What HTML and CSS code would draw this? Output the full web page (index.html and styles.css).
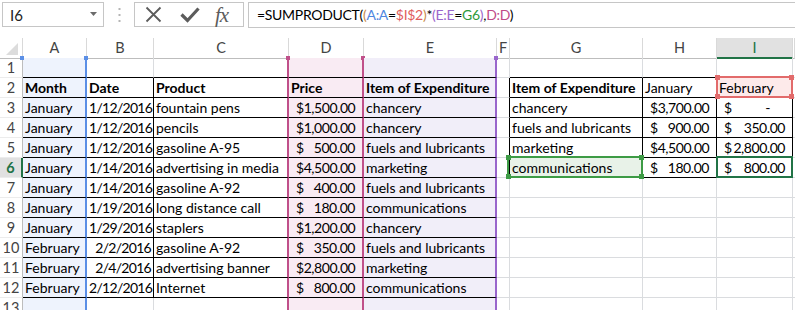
FILE: index.html
```html
<!DOCTYPE html>
<html lang="en">
<head>
    <meta charset="UTF-8">
    <title>SUMPRODUCT</title>
    <link rel="stylesheet" href="styles.css">
</head>
<body>
    <!-- Barra de fórmulas -->
    <div class="formula-bar">
        <div class="name-box">
            <span>I6</span>
            <svg width="8" height="5" viewBox="0 0 8 5"><path d="M0 0h7l-3.5 4z" fill="#6b6b6b"/></svg>
        </div>
        <div class="grip">
            <svg width="3" height="14" viewBox="0 0 3 14">
                <rect x="0.5" y="0" width="2" height="2" fill="#b5b5b5"/>
                <rect x="0.5" y="6" width="2" height="2" fill="#b5b5b5"/>
                <rect x="0.5" y="12" width="2" height="2" fill="#b5b5b5"/>
            </svg>
        </div>
        <div class="fx-box">
            <svg class="ico-x" width="17" height="17" viewBox="0 0 17 17"><path d="M1.5 1.5l14 14M15.5 1.5l-14 14" stroke="#5c5c5c" stroke-width="1.8"/></svg>
            <svg class="ico-ok" width="20" height="16" viewBox="0 0 20 16"><path d="M1.5 7.5l6 6l11-12" stroke="#5c5c5c" stroke-width="3.2" fill="none"/></svg>
            <span class="fx">fx</span>
        </div>
        <div class="formula-input">=SUMPRODUCT(<span class="p2">(</span><span class="f-a">A:A</span>=<span class="f-i">$I$2</span><span class="p2">)</span>*<span class="p3">(</span><span class="f-e">E:E</span>=<span class="f-g">G6</span><span class="p3">)</span>,<span class="f-d">D:D</span>)</div>
    </div>

    <!-- Planilha -->
    <div class="sheet">
        <div class="row head">
            <div class="corner"><span class="tri"></span></div>
            <div class="ch">A</div><div class="ch">B</div><div class="ch">C</div><div class="ch">D</div>
            <div class="ch">E</div><div class="ch">F</div><div class="ch">G</div><div class="ch">H</div>
            <div class="ch ch-on">I</div><div class="ch"></div>
        </div>

        <div class="row">
            <div class="rh">1</div>
            <div class="c ra tt"><i class="hd hd-l blue"></i><i class="hd hd-r blue"></i></div>
            <div class="c tt"></div>
            <div class="c rc tt"></div>
            <div class="c rd tt"><i class="hd hd-l pink"></i><i class="hd hd-r pink"></i></div>
            <div class="c re tt"><i class="hd hd-r purple"></i></div>
            <div class="c"></div>
            <div class="c tt"></div><div class="c tt"></div><div class="c tt"></div><div class="c"></div>
        </div>

        <div class="row">
            <div class="rh">2</div>
            <div class="c ra t b">Month</div>
            <div class="c t b">Date</div>
            <div class="c rc t b">Product</div>
            <div class="c rd t b">Price</div>
            <div class="c re t b">Item of Expenditure</div>
            <div class="c tl"></div>
            <div class="c t b">Item of Expenditure</div>
            <div class="c t">January</div>
            <div class="c t mark-red"><span class="mark"><i></i><i></i><i></i><i></i></span>February</div>
            <div class="c"></div>
        </div>

        <div class="row">
            <div class="rh">3</div>
            <div class="c ra t">January</div>
            <div class="c t num">1/12/2016</div>
            <div class="c rc t">fountain pens</div>
            <div class="c rd t acc"><span>$</span><span>1,500.00</span></div>
            <div class="c re t">chancery</div>
            <div class="c tl"></div>
            <div class="c t">chancery</div>
            <div class="c t acc"><span>$</span><span>3,700.00</span></div>
            <div class="c t acc zero"><span>$</span><span>-</span></div>
            <div class="c"></div>
        </div>

        <div class="row">
            <div class="rh">4</div>
            <div class="c ra t">January</div>
            <div class="c t num">1/12/2016</div>
            <div class="c rc t">pencils</div>
            <div class="c rd t acc"><span>$</span><span>1,000.00</span></div>
            <div class="c re t">chancery</div>
            <div class="c tl"></div>
            <div class="c t">fuels and lubricants</div>
            <div class="c t acc"><span>$</span><span>900.00</span></div>
            <div class="c t acc"><span>$</span><span>350.00</span></div>
            <div class="c"></div>
        </div>

        <div class="row">
            <div class="rh">5</div>
            <div class="c ra t">January</div>
            <div class="c t num">1/12/2016</div>
            <div class="c rc t">gasoline A-95</div>
            <div class="c rd t acc"><span>$</span><span>500.00</span></div>
            <div class="c re t">fuels and lubricants</div>
            <div class="c tl"></div>
            <div class="c t">marketing</div>
            <div class="c t acc"><span>$</span><span>4,500.00</span></div>
            <div class="c t acc"><span>$</span><span>2,800.00</span></div>
            <div class="c"></div>
        </div>

        <div class="row">
            <div class="rh rh-on">6</div>
            <div class="c ra t">January</div>
            <div class="c t num">1/14/2016</div>
            <div class="c rc t">advertising in media</div>
            <div class="c rd t acc"><span>$</span><span>4,500.00</span></div>
            <div class="c re t">marketing</div>
            <div class="c tl"></div>
            <div class="c t mark-green"><span class="mark"><i></i><i></i><i></i><i></i></span>communications</div>
            <div class="c t acc"><span>$</span><span>180.00</span></div>
            <div class="c t acc active"><span class="mark"></span><span>$</span><span>800.00</span></div>
            <div class="c"></div>
        </div>

        <div class="row">
            <div class="rh">7</div>
            <div class="c ra t">January</div>
            <div class="c t num">1/14/2016</div>
            <div class="c rc t">gasoline A-92</div>
            <div class="c rd t acc"><span>$</span><span>400.00</span></div>
            <div class="c re t">fuels and lubricants</div>
            <div class="c"></div><div class="c"></div><div class="c"></div><div class="c"></div><div class="c"></div>
        </div>

        <div class="row">
            <div class="rh">8</div>
            <div class="c ra t">January</div>
            <div class="c t num">1/19/2016</div>
            <div class="c rc t">long distance call</div>
            <div class="c rd t acc"><span>$</span><span>180.00</span></div>
            <div class="c re t">communications</div>
            <div class="c"></div><div class="c"></div><div class="c"></div><div class="c"></div><div class="c"></div>
        </div>

        <div class="row">
            <div class="rh">9</div>
            <div class="c ra t">January</div>
            <div class="c t num">1/29/2016</div>
            <div class="c rc t">staplers</div>
            <div class="c rd t acc"><span>$</span><span>1,200.00</span></div>
            <div class="c re t">chancery</div>
            <div class="c"></div><div class="c"></div><div class="c"></div><div class="c"></div><div class="c"></div>
        </div>

        <div class="row">
            <div class="rh">10</div>
            <div class="c ra t">February</div>
            <div class="c t num">2/2/2016</div>
            <div class="c rc t">gasoline A-92</div>
            <div class="c rd t acc"><span>$</span><span>350.00</span></div>
            <div class="c re t">fuels and lubricants</div>
            <div class="c"></div><div class="c"></div><div class="c"></div><div class="c"></div><div class="c"></div>
        </div>

        <div class="row">
            <div class="rh">11</div>
            <div class="c ra t">February</div>
            <div class="c t num">2/4/2016</div>
            <div class="c rc t">advertising banner</div>
            <div class="c rd t acc"><span>$</span><span>2,800.00</span></div>
            <div class="c re t">marketing</div>
            <div class="c"></div><div class="c"></div><div class="c"></div><div class="c"></div><div class="c"></div>
        </div>

        <div class="row">
            <div class="rh">12</div>
            <div class="c ra t">February</div>
            <div class="c t num">2/12/2016</div>
            <div class="c rc t">Internet</div>
            <div class="c rd t acc"><span>$</span><span>800.00</span></div>
            <div class="c re t">communications</div>
            <div class="c"></div><div class="c"></div><div class="c"></div><div class="c"></div><div class="c"></div>
        </div>

        <div class="row">
            <div class="rh">13</div>
            <div class="c ra"></div>
            <div class="c"></div>
            <div class="c rc"></div>
            <div class="c rd"></div>
            <div class="c re"></div>
            <div class="c"></div><div class="c"></div><div class="c"></div><div class="c"></div><div class="c"></div>
        </div>
    </div>
</body>
</html>
```

FILE: styles.css
```css
/* Reset */
* {
    margin: 0;
    padding: 0;
    box-sizing: border-box;
}

body {
    width: 795px;
    height: 310px;
    overflow: hidden;
    background: #fff;
    color: #000;
    font-family: Lato, "Open Sans", sans-serif;
}

/* Barra de fórmulas */
.formula-bar {
    display: flex;
    align-items: flex-start;
    height: 38px;
    padding: 2px 0 0 2px;
}

.name-box {
    width: 102px;
    height: 25px;
    border: 1px solid #c6c6c6;
    display: flex;
    align-items: center;
    justify-content: space-between;
    padding: 0 5px 0 7px;
    font-size: 15px;
    color: #222;
}

.grip {
    width: 30px;
    height: 25px;
    display: flex;
    align-items: center;
    justify-content: center;
}

.fx-box {
    width: 110px;
    height: 25px;
    border: 1px solid #c6c6c6;
    display: flex;
    align-items: center;
    padding-left: 10px;
}

.ico-x {
    margin-right: 18px;
}

.ico-ok {
    margin-right: 15px;
}

.fx {
    font-family: "Liberation Serif", serif;
    font-style: italic;
    font-size: 21px;
    color: #5c5c5c;
    letter-spacing: -1px;
    line-height: 20px;
}

.formula-input {
    flex: 1;
    height: 26px;
    margin-left: 4px;
    border: 1px solid #c6c6c6;
    border-right: none;
    padding-left: 8px;
    font-size: 14px;
    letter-spacing: -0.3px;
    line-height: 24px;
    white-space: nowrap;
}

.p2 { color: #c98a4a; }
.p3 { color: #9a66cc; }
.f-a { color: #4f86e0; }
.f-i { color: #e05c5c; }
.f-e { color: #9a66cc; }
.f-g { color: #2f9a3c; }
.f-d { color: #bf4a88; }

/* Planilha */
.row {
    display: grid;
    grid-template-columns: 23px 64px 67px 135px 75px 133px 13px 133px 74px 76px 1fr;
    height: 20px;
    font-size: 14px;
}

.corner {
    position: relative;
    border-right: 1px solid #d9d9d9;
    border-bottom: 1px solid #bdbdbd;
}

.corner .tri {
    position: absolute;
    right: 4px;
    bottom: 3px;
    width: 0;
    height: 0;
    border-left: 12px solid transparent;
    border-bottom: 12px solid #dcdcdc;
}

.ch {
    border-right: 1px solid #d9d9d9;
    border-bottom: 1px solid #bdbdbd;
    text-align: center;
    line-height: 19px;
    color: #444;
    font-size: 14.5px;
}

.ch-on {
    background: #e1e1e1;
    color: #217346;
    border-bottom: 2px solid #217346;
}

.rh {
    border-right: 1px solid #bdbdbd;
    border-bottom: 1px solid #ececec;
    text-align: center;
    line-height: 19px;
    color: #444;
    font-size: 14.5px;
}

.rh-on {
    background: #e1e1e1;
    color: #217346;
    font-weight: bold;
    border-right: 2px solid #217346;
}

.c {
    position: relative;
    border-right: 1px solid #dadcdf;
    border-bottom: 1px solid #dadcdf;
    line-height: 19px;
    padding-left: 2px;
    white-space: nowrap;
}

/* Bordas da tabela */
.t {
    border-right-color: #000;
    border-bottom-color: #000;
}

.tt {
    border-bottom-color: #000;
}

.tl {
    border-right-color: #000;
}

.b {
    font-weight: bold;
}

.num {
    text-align: right;
    padding-right: 2px;
    letter-spacing: -0.7px;
}

.acc {
    display: flex;
    justify-content: space-between;
    padding: 0 7px 0 7px;
    letter-spacing: -0.45px;
}

.acc.zero {
    padding-right: 22px;
}

/* Intervalos destacados da fórmula */
.ra {
    background: #eef3fd;
    border-right: 2px solid #5b8fe6;
}

.rc {
    border-right: 2px solid #c0508a;
}

.rd {
    background: #f9ebf3;
    border-right: 2px solid #c0508a;
}

.re {
    background: #f1eef9;
    border-right: 2px solid #9966cc;
}

.hd {
    position: absolute;
    top: -2px;
    width: 4px;
    height: 4px;
}

.hd-l { left: -3px; }
.hd-r { right: -3px; }

.blue { background: #5b8fe6; }
.pink { background: #c0508a; }
.purple { background: #9966cc; }

.mark {
    position: absolute;
    top: -2px;
    left: -1px;
    right: -1px;
    bottom: -1px;
    border: 2px solid;
    z-index: 2;
}

.mark i {
    position: absolute;
    width: 5px;
    height: 5px;
}

.mark i:nth-child(1) { left: -3px; top: -3px; }
.mark i:nth-child(2) { right: -3px; top: -3px; }
.mark i:nth-child(3) { left: -3px; bottom: -3px; }
.mark i:nth-child(4) { right: -3px; bottom: -3px; }

.mark-red {
    background: #fdeaea;
}

.mark-red .mark {
    border-color: #e26b6b;
}

.mark-red .mark i {
    background: #e26b6b;
}

.mark-green {
    background: #e8f2e8;
}

.mark-green .mark {
    border-color: #3d9b45;
    left: -3px;
}

.mark-green .mark i {
    background: #3d9b45;
}

.active .mark {
    border-color: #217346;
    z-index: 3;
}
```
